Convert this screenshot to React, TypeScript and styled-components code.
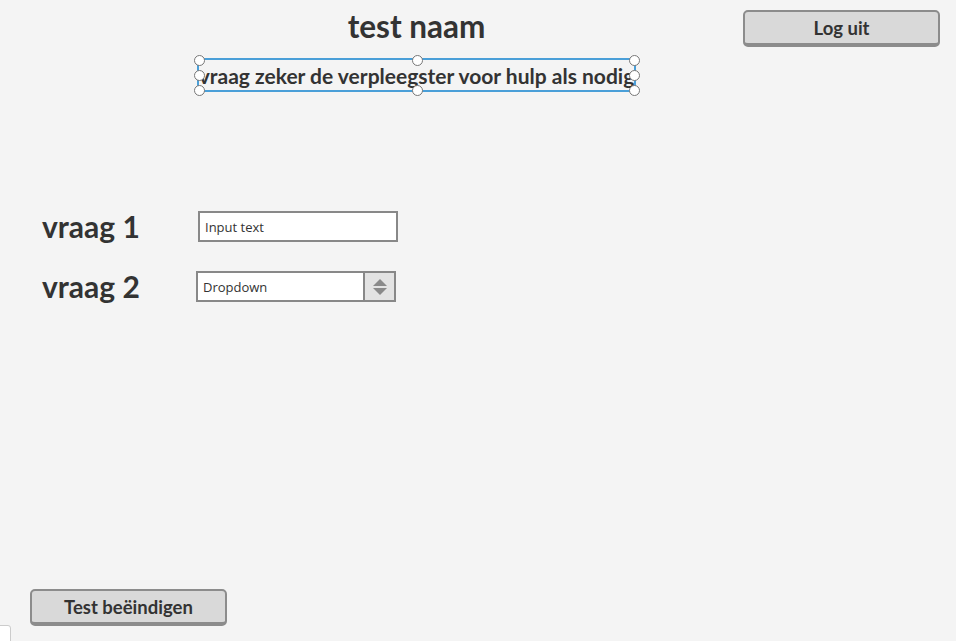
import React from "react";
import styled, { createGlobalStyle } from "styled-components";

const Global = createGlobalStyle`
  html, body { margin: 0; padding: 0; background: #f4f4f4; }
  body { font-family: Lato, "Open Sans", sans-serif; color: #333; }
`;

const Page = styled.div`
  width: 956px;
  height: 641px;
  display: flex;
  flex-direction: column;
  position: relative;
  overflow: hidden;
  background: #f4f4f4;
`;

const Header = styled.div`
  display: grid;
  grid-template-columns: 197px 439px 1fr;
  padding-top: 9px;
`;

const Center = styled.div`
  grid-column: 2;
  display: flex;
  flex-direction: column;
  align-items: center;
`;

const Title = styled.h1`
  margin: 0;
  font-size: 31.5px;
  font-weight: 700;
  line-height: 34px;
  color: #333;
`;

const Selection = styled.div`
  position: relative;
  margin-top: 15px;
  width: 435px;
  height: 30px;
  border: 2px solid #4a9fd8;
  display: flex;
  align-items: center;
  justify-content: center;
`;

const Clip = styled.div`
  width: 100%;
  overflow: hidden;
  display: flex;
  justify-content: center;
`;

const SubText = styled.span`
  white-space: nowrap;
  font-size: 21px;
  font-weight: 700;
  color: #333;
`;

const Handle = styled.span<{ $x: string; $y: string }>`
  position: absolute;
  left: ${(p) => p.$x};
  top: ${(p) => p.$y};
  width: 9px;
  height: 9px;
  margin: -5px 0 0 -5px;
  border-radius: 50%;
  background: #fff;
  border: 1px solid #777;
  box-sizing: content-box;
`;

const Right = styled.div`
  grid-column: 3;
  display: flex;
  justify-content: flex-end;
  padding-right: 16px;
  padding-top: 1px;
`;

const Button = styled.button`
  width: 197px;
  height: 37px;
  box-sizing: border-box;
  background: #d9d9d9;
  border: 2px solid #8c8c8c;
  border-bottom-width: 4px;
  border-radius: 5px;
  font-family: Lato, "Open Sans", sans-serif;
  font-weight: 700;
  font-size: 18.5px;
  color: #333;
  display: flex;
  align-items: center;
  justify-content: center;
  padding: 0;
`;

const Form = styled.div`
  margin-top: 119px;
  padding-left: 42px;
  display: flex;
  flex-direction: column;
  gap: 29px;
`;

const Row = styled.div`
  display: flex;
  align-items: center;
`;

const Label = styled.div`
  width: 156px;
  font-size: 30px;
  font-weight: 700;
  color: #333;
  line-height: 31px;
`;

const InputBox = styled.div<{ $shift?: number }>`
  margin-left: ${(p) => p.$shift ?? 0}px;
  width: 200px;
  height: 31px;
  box-sizing: border-box;
  border: 2px solid #888;
  background: #fff;
  display: flex;
  align-items: center;
  font-family: "Open Sans", Lato, sans-serif;
  font-size: 13px;
  color: #333;
`;

const InputText = styled.span`
  flex: 1;
  padding-left: 5px;
`;

const Spinner = styled.div`
  width: 29px;
  height: 100%;
  border-left: 2px solid #888;
  background: #e3e3e3;
  display: flex;
  align-items: center;
  justify-content: center;
`;

const Footer = styled.div`
  margin-top: auto;
  padding: 0 0 15px 30px;
`;

const Corner = styled.div`
  position: absolute;
  left: -1px;
  bottom: -3px;
  width: 10px;
  height: 17px;
  background: #fff;
  border: 1px solid #ccc;
  border-radius: 0 3px 0 0;
`;

export default function App() {
  const handles: [string, string][] = [
    ["0%", "0%"], ["50%", "0%"], ["100%", "0%"],
    ["0%", "50%"], ["100%", "50%"],
    ["0%", "100%"], ["50%", "100%"], ["100%", "100%"],
  ];
  return (
    <>
      <Global />
      <Page>
        <Header>
          <Center>
            <Title>test naam</Title>
            <Selection>
              <Clip>
                <SubText>vraag zeker de verpleegster voor hulp als nodig</SubText>
              </Clip>
              {handles.map(([x, y], i) => (
                <Handle key={i} $x={x} $y={y} />
              ))}
            </Selection>
          </Center>
          <Right>
            <Button>Log uit</Button>
          </Right>
        </Header>
        <Form>
          <Row>
            <Label>vraag 1</Label>
            <InputBox>
              <InputText>Input text</InputText>
            </InputBox>
          </Row>
          <Row>
            <Label>vraag 2</Label>
            <InputBox $shift={-2}>
              <InputText>Dropdown</InputText>
              <Spinner>
                <svg width="16" height="20" viewBox="0 0 16 20">
                  <path d="M8 2 L15 9 L1 9 Z" fill="#8a8a8a" />
                  <path d="M1 11 L15 11 L8 18 Z" fill="#8a8a8a" />
                </svg>
              </Spinner>
            </InputBox>
          </Row>
        </Form>
        <Footer>
          <Button>Test beëindigen</Button>
        </Footer>
        <Corner />
      </Page>
    </>
  );
}
